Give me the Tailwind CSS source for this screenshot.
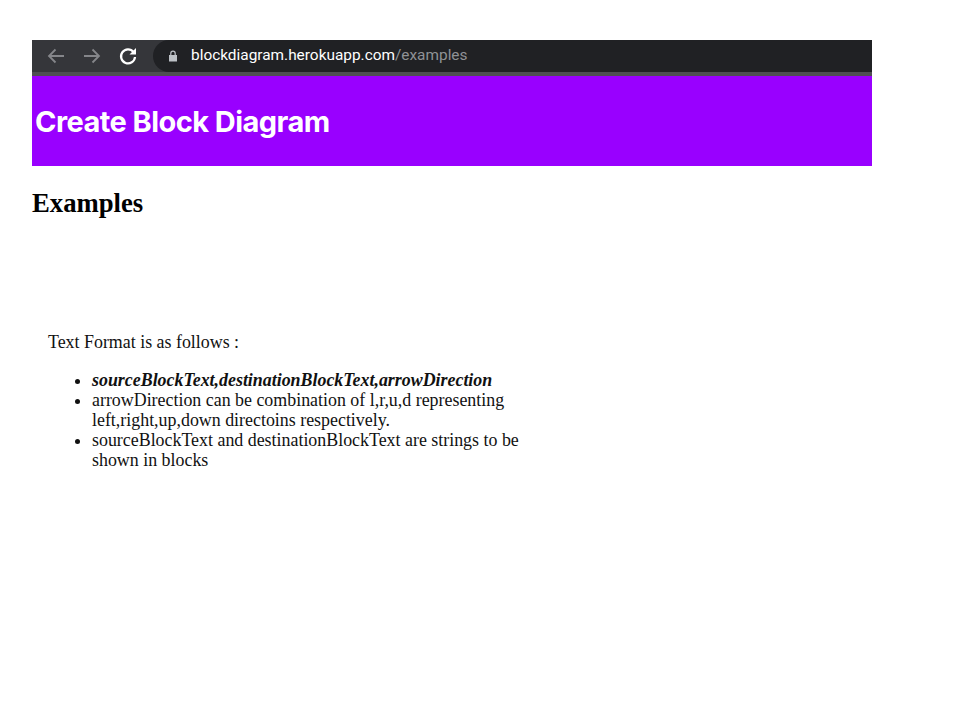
<!DOCTYPE html>
<html lang="en">
  <head>
    <meta charset="UTF-8" />
    <meta name="viewport" content="width=device-width, initial-scale=1.0" />
    <title>Create Block Diagram</title>
    <script src="https://cdn.jsdelivr.net/npm/@tailwindcss/browser@4"></script>
  </head>
  <body class="bg-white text-black font-['Liberation_Serif',serif]">
    <div class="w-[840px] ml-8 pt-10">
      <!-- browser toolbar -->
      <div class="h-8 bg-[#35363a] flex items-center">
        <div class="w-[121px] flex items-center shrink-0 pl-[14px] gap-[16px]">
          <svg class="w-5 h-5 text-[#85868a]" viewBox="0 0 20 20" fill="none" stroke="currentColor" stroke-width="1.8">
            <path d="M18 10H3M9.500 3.500 3 10l6.500 6.500" />
          </svg>
          <svg class="w-5 h-5 text-[#85868a]" viewBox="0 0 20 20" fill="none" stroke="currentColor" stroke-width="1.8">
            <path d="M2 10h15M10.500 3.500 17 10l-6.500 6.500" />
          </svg>
          <svg class="w-5 h-5 text-white" viewBox="0 0 20 20" fill="none" stroke="currentColor" stroke-width="2.200">
            <path d="M15.500 6A7 7 0 1 0 17 11" />
            <path d="M18 2v6.500h-6.500z" fill="currentColor" stroke="none" />
          </svg>
        </div>
        <div class="flex-1 h-full bg-[#202124] rounded-l-[16px] flex items-center pl-[14px]">
          <svg class="w-3 h-3 text-[#bdc1c6] mr-[12px]" viewBox="0 0 12 12" fill="currentColor">
            <path d="M2 5h8v6.500H2z" />
            <path d="M3.800 5V3.400a2.200 2.200 0 0 1 4.400 0V5" fill="none" stroke="currentColor" stroke-width="1.200" />
          </svg>
          <span class="font-['Roboto',sans-serif] text-[15.400px] text-white">blockdiagram.herokuapp.com<span class="text-[#8f9296]">/examples</span></span>
        </div>
      </div>
      <div class="h-1 bg-[#4f4f52]"></div>

      <header class="h-[90px] bg-[#9900ff] flex items-center pl-[3px]">
        <h1 class="font-['Inter',sans-serif] text-[29px] font-bold text-white tracking-[-0.55px] mt-[1px]">Create Block Diagram</h1>
      </header>

      <h2 class="text-[26.700px] font-bold leading-[30px] mt-[22px]">Examples</h2>

      <section class="w-[490px] mt-[114px] pl-4 text-[17.900px] leading-5 text-[#111]">
        <p>Text Format is as follows :</p>
        <ul class="list-disc pl-[44px] mt-[18px]">
          <li><b><i>sourceBlockText,destinationBlockText,arrowDirection</i></b></li>
          <li>arrowDirection can be combination of l,r,u,d representing left,right,up,down directoins respectively.</li>
          <li>sourceBlockText and destinationBlockText are strings to be shown in blocks</li>
        </ul>
      </section>
    </div>
  </body>
</html>
